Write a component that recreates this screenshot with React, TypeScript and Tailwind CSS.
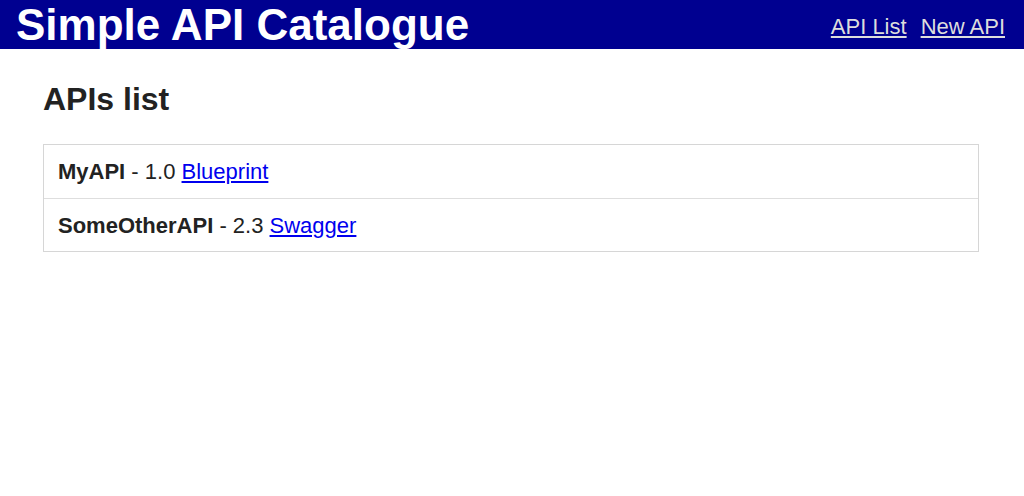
const apis = [
  { name: 'MyAPI', version: '1.0', spec: 'Blueprint' },
  { name: 'SomeOtherAPI', version: '2.3', spec: 'Swagger' },
]

export default function App() {
  return (
    <div className="min-h-[496px] bg-white font-['Liberation_Sans',Arial,sans-serif] text-[22px] text-[#222]">
      <header className="flex h-[49px] items-center justify-between bg-[#000090] pl-4 pr-[19px]">
        <h1 className="text-[44px] leading-none font-bold text-white">Simple API Catalogue</h1>
        <nav className="flex gap-[14px] pt-1">
          <a href="#" className="text-[#ddd] underline">API List</a>
          <a href="#" className="text-[#ddd] underline">New API</a>
        </nav>
      </header>
      <main className="ml-[43px] mr-[45px]">
        <h2 className="mt-[30px] mb-[25px] text-[32px] leading-tight font-bold">APIs list</h2>
        <ul className="border border-[#d6d6d6]">
          {apis.map((api, i) => (
            <li
              key={api.name}
              className={`flex h-[53px] items-center px-[14px] ${i > 0 ? 'border-t border-[#dedede]' : ''}`}
            >
              <span>
                <b>{api.name}</b> - {api.version}{' '}
                <a href="#" className="text-[#0000ee] underline">{api.spec}</a>
              </span>
            </li>
          ))}
        </ul>
      </main>
    </div>
  )
}
